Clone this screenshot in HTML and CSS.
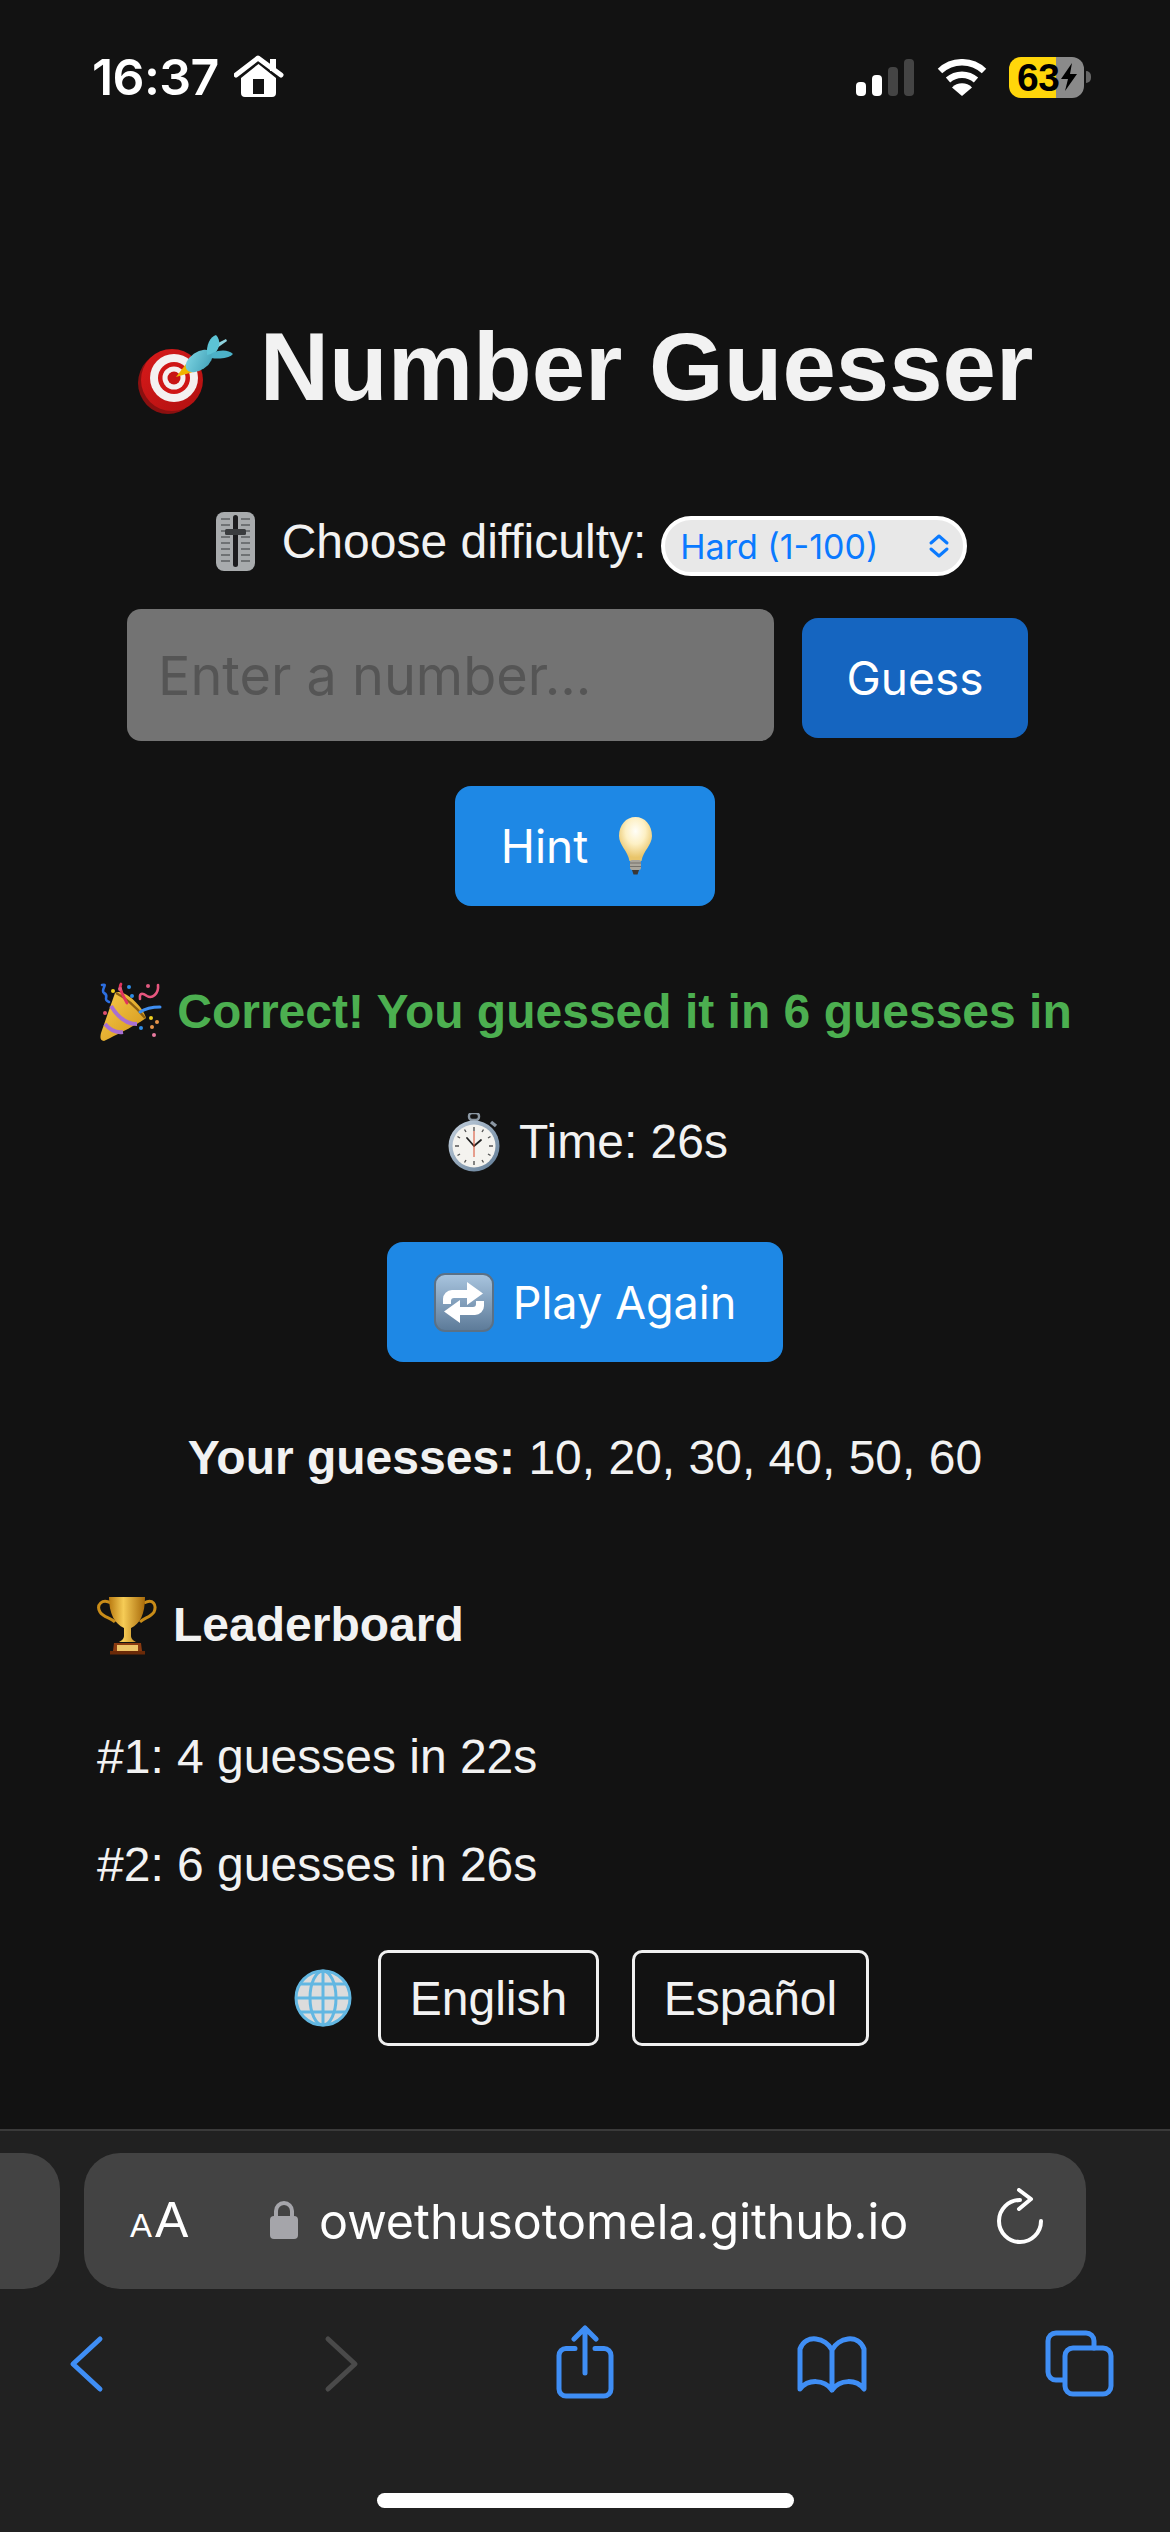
FILE: index.html
```html
<!DOCTYPE html>
<html lang="en">
<head>
<meta charset="utf-8">
<title>Number Guesser</title>
<link rel="stylesheet" href="styles.css">
</head>
<body>
<div class="screen">
  <header class="status">
    <span class="clock">16:37</span>
    <svg class="house" width="50" height="44" viewBox="13 10 50 44"><path d="M15 30 L37 13 L60 30" fill="none" stroke="#fff" stroke-width="5" stroke-linecap="round" stroke-linejoin="round"/><rect x="49" y="14" width="6" height="12" fill="#fff"/><path fill-rule="evenodd" fill="#fff" d="M37.5 19 L55 33 V48 a4 4 0 0 1 -4 4 H24 a4 4 0 0 1 -4 -4 V33 Z M32 34 V49 H43 V34 Z"/></svg>
    <div class="status-right">
      <div class="signal"><i class="bar b1"></i><i class="bar b2"></i><i class="bar b3"></i><i class="bar b4"></i></div>
      <svg class="wifi" width="50" height="37" viewBox="0 0 50 37"><path d="M3 12 A32 32 0 0 1 47 12" fill="none" stroke="#fff" stroke-width="6.5"/><path d="M11 21 A21 21 0 0 1 39 21" fill="none" stroke="#fff" stroke-width="6.5"/><path d="M25 37 L15 28.5 A14 14 0 0 1 35 28.5 Z" fill="#fff"/></svg>
      <div class="battery"><span class="batt-num">63</span><svg width="18" height="28" viewBox="0 0 18 28"><path d="M12 0 L1 16 H8 L5 28 L17 11 H10 Z" fill="#000"/></svg></div>
      <i class="nub"></i>
    </div>
  </header>

  <main class="game">
    <h1 class="title">
      <svg width="97" height="110" viewBox="19 0 97 110">
        <defs>
          <linearGradient id="tl" x1="0" y1="0" x2="1" y2="1"><stop offset="0" stop-color="#7fd6e4"/><stop offset="1" stop-color="#3f9fb6"/></linearGradient>
          <linearGradient id="disc" x1="0" y1="0" x2="1" y2="1"><stop offset="0" stop-color="#d81a1a"/><stop offset="1" stop-color="#b01010"/></linearGradient>
        </defs>
        <ellipse cx="50" cy="71" rx="30" ry="31" fill="#8a1010"/>
        <circle cx="54" cy="68" r="31" fill="url(#disc)"/>
        <circle cx="56" cy="66" r="24" fill="#f4f0f0"/>
        <circle cx="56" cy="66" r="16" fill="#cf1616"/>
        <circle cx="56" cy="66" r="11.5" fill="#f4f0f0"/>
        <circle cx="56" cy="66" r="6.5" fill="#c81414"/>
        <path d="M58 65 L68 52 L75 60 Z" fill="#f0b400"/>
        <path d="M98 32 L108 27 L109 29 L99 36 Z" fill="#8fd3de"/>
        <ellipse cx="81" cy="49" rx="15" ry="9" transform="rotate(-35 81 49)" fill="url(#tl)"/>
        <path d="M89 43 C88 33 92 25 98 23 C103 28 102 36 97 41 Z" fill="#5cc3d5"/>
        <path d="M94 41 C103 37 111 38 115 42 C110 47 100 47 93 46 Z" fill="#4cb2c8"/>
      </svg>
      <span>Number Guesser</span>
    </h1>

    <div class="difficulty">
      <svg class="lift" width="41" height="61" viewBox="10 6 41 61">
        <rect x="11" y="7" width="39" height="59" rx="8" fill="#a8abad"/>
        <path d="M16 14 H25 M36 14 H45 M16 20 H25 M36 20 H45 M16 26 H25 M36 26 H45 M16 32 H25 M36 32 H45 M16 38 H25 M36 38 H45 M16 44 H25 M36 44 H45 M16 50 H25 M36 50 H45 M16 56 H25 M36 56 H45" stroke="#6f7274" stroke-width="1.8"/>
        <rect x="28" y="10" width="5" height="52" rx="2.5" fill="#1c1c1e"/>
        <rect x="20" y="24" width="21" height="6" rx="1.5" fill="#3a3c3e"/>
      </svg>
      <label class="lift">Choose difficulty:</label>
      <div class="select"><span>Hard (1-100)</span><svg width="22" height="24" viewBox="0 0 22 24"><path d="M3 9 L11 2 L19 9 M3 15 L11 22 L19 15" fill="none" stroke="#0a7aff" stroke-width="3" stroke-linecap="round" stroke-linejoin="round"/></svg></div>
    </div>

    <div class="guess-row">
      <input class="number" type="text" placeholder="Enter a number...">
      <button class="btn guess">Guess</button>
    </div>

    <div class="center hint-wrap">
      <button class="btn primary hint"><span>Hint</span>
        <svg width="35" height="58" viewBox="0 0 35 58">
          <defs><radialGradient id="bulb" cx=".5" cy=".32" r=".6"><stop offset="0" stop-color="#fffef8"/><stop offset=".5" stop-color="#fdf0c4"/><stop offset="1" stop-color="#e9c56b"/></radialGradient></defs>
          <path d="M17.5 0 C8 0 1 8 1 19 C1 28 10 34 11.5 44 H23.5 C25 34 34 28 34 19 C34 8 27 0 17.5 0 Z" fill="url(#bulb)"/>
          <rect x="12" y="43" width="11" height="10" rx="2" fill="#a9a59b"/>
          <path d="M12 46 H23 M12 49.5 H23" stroke="#76716a" stroke-width="1.2"/>
          <path d="M14 53 H21 L19.5 57.5 H15.5 Z" fill="#3a3734"/>
        </svg>
      </button>
    </div>

    <p class="feedback">
      <svg width="64" height="62" viewBox="8 6 64 62">
        <defs><linearGradient id="cone" x1="0" y1="0" x2="1" y2="1"><stop offset="0" stop-color="#f7cb4a"/><stop offset="1" stop-color="#d3951a"/></linearGradient></defs>
        <path d="M12 10 C19 8 10 15 14 18 C20 21 12 24 19 27" fill="none" stroke="#2d6fe0" stroke-width="2.6" stroke-linecap="round"/>
        <path d="M25 18 C33 13 52 30 56 43 C50 48 30 58 14 66 C10 66 10 62 11 58 Z" fill="url(#cone)"/>
        <path d="M21 31 C27 41 36 49 47 49" fill="none" stroke="#a86fd2" stroke-width="4"/>
        <path d="M15 49 C20 55 26 58 33 57" fill="none" stroke="#a86fd2" stroke-width="4"/>
        <path d="M26 18 C34 22 46 32 55 43" fill="none" stroke="#8c5f12" stroke-width="2.4"/>
        <path d="M31 9 C28 13 33 20 37 28" fill="none" stroke="#e2345e" stroke-width="2.8" stroke-linecap="round"/>
        <path d="M50 24 C49 16 54 19 57 21 C62 24 69 19 68 10" fill="none" stroke="#e8567e" stroke-width="2.6" stroke-linecap="round"/>
        <path d="M50 37 C56 33 62 32 70 32" fill="none" stroke="#3f8ef0" stroke-width="3" stroke-linecap="round"/>
        <circle cx="23" cy="16" r="2" fill="#f0d020"/><circle cx="39" cy="12" r="2" fill="#2f8de8"/><circle cx="30" cy="14" r="2" fill="#e05a80"/><circle cx="42" cy="21" r="2" fill="#2f8de8"/><circle cx="58" cy="11" r="2" fill="#e05a80"/><circle cx="15" cy="38" r="2" fill="#e0506e"/><circle cx="61" cy="43" r="2" fill="#f0d020"/><circle cx="67" cy="47" r="2" fill="#e8944a"/><circle cx="62" cy="52" r="2" fill="#e8944a"/><circle cx="51" cy="53" r="2" fill="#2f8de8"/><circle cx="64" cy="60" r="2" fill="#e87aa0"/>
      </svg>
      <span>Correct! You guessed it in 6 guesses in</span>
    </p>

    <p class="time">
      <svg width="52" height="59" viewBox="0 0 52 59">
        <defs><linearGradient id="bez" x1="0" y1="0" x2="1" y2="1"><stop offset="0" stop-color="#c8d4e0"/><stop offset="1" stop-color="#5d7994"/></linearGradient></defs>
        <rect x="21" y="0" width="10" height="7" rx="3" fill="none" stroke="#8b97a3" stroke-width="2.4"/>
        <rect x="23" y="6" width="6" height="4" fill="#8b97a3"/>
        <path d="M43 9 L48 13" stroke="#8b97a3" stroke-width="3.5"/>
        <circle cx="26" cy="33" r="25.5" fill="url(#bez)"/>
        <circle cx="26" cy="33" r="21.5" fill="#f4f3ef"/>
        <path d="M26 14 V18 M26 48 V52 M7 33 H11 M41 33 H45 M16.5 16.5 L18 19 M35.5 16.5 L34 19 M16.5 49.5 L18 47 M35.5 49.5 L34 47 M9.5 23.5 L12 25 M42.5 23.5 L40 25 M9.5 42.5 L12 41 M42.5 42.5 L40 41" stroke="#555" stroke-width="1.4"/>
        <path d="M26 33 L19 25 M26 33 L33 27" stroke="#222" stroke-width="1.8" stroke-linecap="round"/>
        <path d="M26 18 V44" stroke="#d8482a" stroke-width="1"/>
      </svg>
      <span>Time: 26s</span>
    </p>

    <div class="center play-wrap">
      <button class="btn primary play">
        <svg width="60" height="59" viewBox="0 0 60 59">
          <defs><linearGradient id="rep" x1="0" y1="0" x2="0" y2="1"><stop offset="0" stop-color="#a9c5df"/><stop offset="1" stop-color="#5c7a98"/></linearGradient></defs>
          <rect x="1" y="1" width="58" height="57" rx="10" fill="url(#rep)" stroke="#5b7186" stroke-width="2"/>
          <g id="arrow"><path d="M9 31 V26 a9 9 0 0 1 9 -9 H33 V9 L49 20.5 L33 32 V25 H20 a3 3 0 0 0 -3 3 V31 Z" fill="#fff"/></g>
          <use href="#arrow" transform="rotate(180 29.5 29.5)"/>
        </svg>
        <span>Play Again</span>
      </button>
    </div>

    <p class="history"><strong>Your guesses:</strong> 10, 20, 30, 40, 50, 60</p>

    <h2 class="board-title">
      <svg width="60" height="60" viewBox="7 9 60 60">
        <defs><linearGradient id="gold" x1="0" y1="0" x2="1" y2="0"><stop offset="0" stop-color="#b97a10"/><stop offset=".4" stop-color="#f6cc56"/><stop offset="1" stop-color="#a86a0a"/></linearGradient></defs>
        <path d="M21 17 C12 12 6 19 10 26 C13 31 21 32 25 36" fill="none" stroke="#c98c18" stroke-width="3"/>
        <path d="M54 17 C63 12 67 19 64 26 C61 31 54 32 50 36" fill="none" stroke="#c98c18" stroke-width="3"/>
        <path d="M19 11 H55 C55 28 50 38 41 42 V50 C41 53 44 55 46 56 H29 C31 55 34 53 34 50 V42 C25 38 19 28 19 11 Z" fill="url(#gold)"/>
        <path d="M24 57 H51 L52 65 H23 Z" fill="#8a3a10"/>
        <rect x="20" y="65" width="35" height="3.5" fill="#6b2a08"/>
        <rect x="27" y="59" width="21" height="6" fill="#eec468"/>
      </svg>
      <span>Leaderboard</span>
    </h2>
    <p class="score first">#1: 4 guesses in 22s</p>
    <p class="score second">#2: 6 guesses in 26s</p>

    <div class="lang">
      <svg width="58" height="58" viewBox="0 0 58 58">
        <circle cx="29" cy="29" r="27" fill="#dcdcdc"/>
        <g fill="none" stroke="#62b7e2" stroke-width="3">
          <circle cx="29" cy="29" r="27"/>
          <ellipse cx="29" cy="29" rx="13" ry="27"/>
          <path d="M29 2 V56 M2 29 H56 M6 15 H52 M6 43 H52"/>
        </g>
      </svg>
      <button class="lang-btn english">English</button>
      <button class="lang-btn spanish">Español</button>
    </div>
  </main>

  <footer class="browser">
    <div class="url-row">
      <div class="stub"></div>
      <div class="pill">
        <span class="aa"><small>A</small>A</span>
        <svg class="lock" width="28" height="38" viewBox="0 0 28 38"><path d="M6 16 V10 a8 8 0 0 1 16 0 V16" fill="none" stroke="#a5a5aa" stroke-width="4"/><rect x="0" y="15" width="28" height="23" rx="4" fill="#a5a5aa"/></svg>
        <span class="url">owethusotomela.github.io</span>
        <svg class="reload" width="60" height="60" viewBox="0 0 60 60"><path d="M30 12 A21 21 0 1 0 51 33" fill="none" stroke="#fff" stroke-width="4" stroke-linecap="round"/><path d="M29 2 L41 11 L29 21" fill="none" stroke="#fff" stroke-width="4" stroke-linecap="round" stroke-linejoin="round"/></svg>
      </div>
    </div>
    <nav class="toolbar">
      <svg width="80" height="80" viewBox="0 0 80 80"><path d="M54 14 L27 39 L54 64" class="tool-on"/></svg>
      <svg width="80" height="80" viewBox="0 0 80 80"><path d="M27 14 L54 39 L27 64" class="tool-off"/></svg>
      <svg width="80" height="80" viewBox="0 0 80 80"><path d="M30 23.5 H21 a7 7 0 0 0 -7 7 V64 a7 7 0 0 0 7 7 H59 a7 7 0 0 0 7 -7 V30.5 a7 7 0 0 0 -7 -7 H50 M40 48 V3 M29 14 L40 3 L51 14" class="tool-on"/></svg>
      <svg width="80" height="80" viewBox="0 0 80 80"><path d="M40 25 C34 13 14 8 8 24 V64 C16 54 32 54 40 65 C48 54 64 54 72 64 V24 C66 8 46 13 40 25 Z M40 25 V65" class="tool-on"/></svg>
      <svg width="80" height="80" viewBox="0 0 80 80"><path d="M23 55 H16 a8 8 0 0 1 -8 -8 V16 a8 8 0 0 1 8 -8 H46 a8 8 0 0 1 8 8 V23" class="tool-on"/><rect x="25" y="23" width="46" height="46" rx="8" class="tool-on"/></svg>
    </nav>
    <div class="home-bar"></div>
  </footer>
</div>
</body>
</html>
```
FILE: styles.css
```css
* { box-sizing: border-box; }
html, body { margin: 0; padding: 0; }
body {
  background: #121212;
  color: #f2f2f2;
  font-family: "Liberation Sans", Arial, sans-serif;
}
.screen {
  width: 1170px;
  height: 2532px;
  display: flex;
  flex-direction: column;
  overflow: hidden;
}

/* status bar */
.status {
  display: flex;
  align-items: center;
  height: 99px;
  padding: 55px 79px 0 92px;
  color: #fff;
}
.clock { font-family: Inter, "Liberation Sans", sans-serif; font-size: 50px; font-weight: 600; letter-spacing: -0.6px; line-height: 44px; }
.house { margin-left: 15px; }
.status-right { margin-left: auto; display: flex; align-items: center; }
.signal { display: flex; align-items: flex-end; gap: 6px; height: 37px; }
.bar { display: block; width: 10px; border-radius: 4px; background: #fff; }
.b1 { height: 14px; }
.b2 { height: 21px; }
.b3 { height: 29px; background: #444; }
.b4 { height: 37px; background: #444; }
.wifi { margin-left: 23px; }
.battery {
  margin-left: 22px;
  width: 75px;
  height: 41px;
  border-radius: 12px;
  background: linear-gradient(90deg, #ffd60a 62.7%, #8a8a8a 62.7%);
  display: flex;
  align-items: center;
  padding-left: 8px;
  color: #000;
}
.batt-num { font-size: 39px; font-weight: 700; line-height: 41px; letter-spacing: -0.5px; }
.battery svg { margin-left: 1px; }
.nub { display: block; width: 5px; height: 12px; margin-left: 2px; border-radius: 0 6px 6px 0; background: #666; }

/* game */
.game { flex: 1; padding: 0 97px; }
.title {
  margin: 218px 0 0;
  height: 100px;
  display: flex;
  align-items: center;
  justify-content: center;
  gap: 26px;
  font-size: 96px;
  line-height: 100px;
  font-weight: 700;
  white-space: nowrap;
}
.difficulty {
  margin-top: 99px;
  height: 60px;
  padding-left: 12px;
  display: flex;
  align-items: center;
  justify-content: center;
  font-size: 48px;
}
.difficulty label { margin-left: 26px; line-height: 60px; }
.lift { margin-bottom: 9px; }
.select {
  margin-left: 15px;
  width: 306px;
  height: 60px;
  border: 4px solid #fff;
  border-radius: 30px;
  background: #e8e8e8;
  color: #0a7aff;
  font-family: Inter, "Liberation Sans", sans-serif;
  font-size: 34px;
  display: flex;
  align-items: center;
  justify-content: space-between;
  padding: 0 13px 0 15px;
}
.guess-row {
  margin-top: 33px;
  display: flex;
  align-items: flex-start;
  padding-left: 30px;
  gap: 28px;
}
.number {
  width: 647px;
  height: 132px;
  border: 0;
  border-radius: 14px;
  background: #737373;
  padding: 0 31px;
  font-family: Inter, "Liberation Sans", sans-serif;
  font-size: 54px;
  color: #fff;
  outline: none;
}
.number::placeholder { color: #555; opacity: 1; }
.btn {
  border: 0;
  border-radius: 16px;
  height: 120px;
  color: #fff;
  font-family: Inter, "Liberation Sans", sans-serif;
  font-size: 46px;
  display: flex;
  align-items: center;
  justify-content: center;
}
.guess { width: 226px; margin-top: 9px; background: #1565c0; }
.primary { background: #1e88e5; }
.center { display: flex; justify-content: center; }
.hint-wrap { margin-top: 45px; }
.hint { width: 260px; gap: 30px; padding: 0 16px 0 0; }
.feedback {
  margin: 76px 0 0;
  height: 60px;
  display: flex;
  align-items: center;
  gap: 15px;
  justify-content: center;
  color: #4caf50;
  font-size: 48px;
  line-height: 60px;
  font-weight: 700;
  white-space: nowrap;
}
.time {
  margin: 70px 0 0;
  height: 60px;
  padding-left: 6px;
  display: flex;
  align-items: center;
  justify-content: center;
  gap: 19px;
  font-size: 48px;
  line-height: 60px;
}
.play-wrap { margin-top: 70px; }
.play { width: 396px; gap: 19px; font-size: 45px; }
.history {
  margin: 66px 0 0;
  font-size: 48px;
  line-height: 60px;
  text-align: center;
  white-space: nowrap;
}
.board-title {
  margin: 107px 0 0;
  height: 60px;
  display: flex;
  align-items: center;
  gap: 16px;
  font-size: 48px;
  line-height: 60px;
}
.score { margin: 0; font-size: 48px; line-height: 60px; }
.first { margin-top: 72px; }
.second { margin-top: 48px; }
.lang {
  margin-top: 55px;
  display: flex;
  align-items: center;
  justify-content: center;
  padding-right: 7px;
}
.lang-btn {
  height: 96px;
  border: 3px solid #f0f0f0;
  border-radius: 10px;
  background: transparent;
  color: #f2f2f2;
  font-family: "Liberation Sans", Arial, sans-serif;
  font-size: 48px;
  padding: 0;
}
.english { width: 221px; margin-left: 26px; }
.spanish { width: 237px; margin-left: 33px; }

/* browser chrome */
.browser {
  height: 403px;
  background: #212121;
  border-top: 2px solid #3a3a3a;
  padding-top: 22px;
}
.url-row { display: flex; gap: 24px; }
.stub { width: 60px; height: 136px; background: #434343; border-radius: 0 36px 36px 0; }
.pill {
  width: 1002px;
  height: 136px;
  background: #434343;
  border-radius: 36px;
  display: flex;
  align-items: center;
  padding-left: 46px;
  color: #fff;
  font-family: Inter, "Liberation Sans", sans-serif;
}
.aa { font-size: 50px; line-height: 50px; width: 140px; margin-top: 4px; font-family: "Liberation Sans", Arial, sans-serif; }
.aa small { font-size: 33px; margin-right: 3px; }
.lock { flex: none; margin-bottom: 2px; }
.url { margin-left: 21px; font-size: 48.4px; }
.reload { margin-left: auto; margin-right: 36px; margin-top: -6px; }
.toolbar {
  margin-top: 36px;
  display: grid;
  grid-template-columns: 172px 338px 150px 344px 152px;
  justify-items: center;
}
.tool-on, .tool-off { fill: none; stroke-width: 5; stroke-linecap: round; stroke-linejoin: round; }
.tool-on { stroke: #3f8ef5; }
.tool-off { stroke: #4a4a4a; }
.home-bar {
  margin: 88px auto 0;
  width: 417px;
  height: 15px;
  border-radius: 8px;
  background: #fff;
}
```
